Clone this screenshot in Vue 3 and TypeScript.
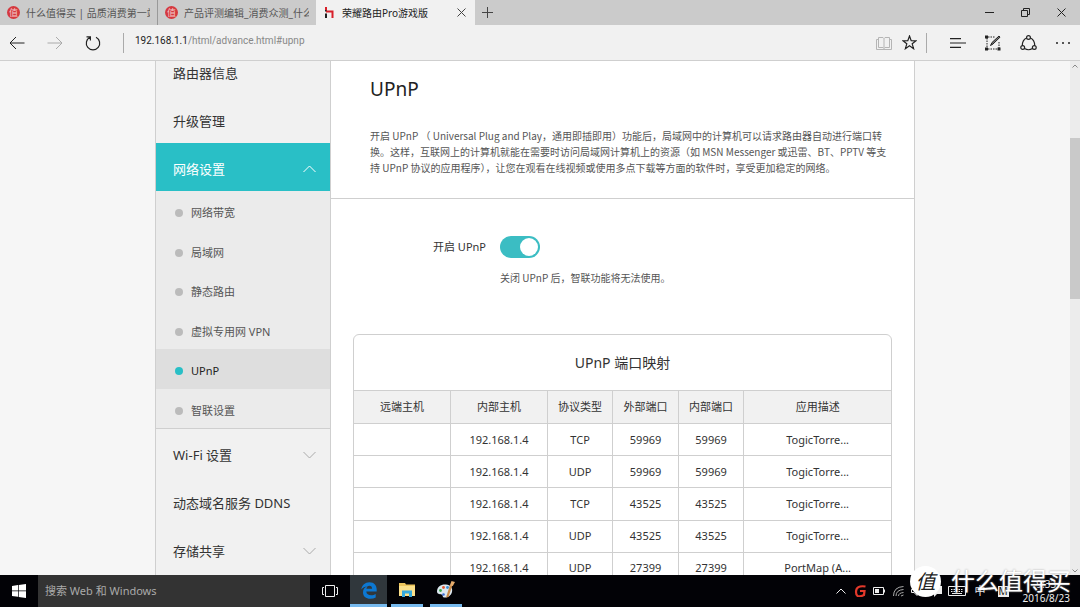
<script setup lang="ts">
import { ref } from 'vue'

interface MenuItem {
  label: string
  arrow?: 'up' | 'down'
  children?: string[]
}

interface Mapping {
  remote: string
  host: string
  protocol: string
  external: string
  internal: string
  description: string
}

const menu: MenuItem[] = [
  { label: '路由器信息' },
  { label: '升级管理' },
  {
    label: '网络设置',
    arrow: 'up',
    children: ['网络带宽', '局域网', '静态路由', '虚拟专用网 VPN', 'UPnP', '智联设置'],
  },
  { label: 'Wi-Fi 设置', arrow: 'down' },
  { label: '动态域名服务 DDNS' },
  { label: '存储共享', arrow: 'down' },
]

const intro: string[] = [
  '开启 UPnP （ Universal Plug and Play，通用即插即用）功能后，局域网中的计算机可以请求路由器自动进行端口转',
  '换。这样，互联网上的计算机就能在需要时访问局域网计算机上的资源（如 MSN Messenger 或迅雷、BT、PPTV 等支',
  '持 UPnP 协议的应用程序），让您在观看在线视频或使用多点下载等方面的软件时，享受更加稳定的网络。',
]

const headers: string[] = ['远端主机', '内部主机', '协议类型', '外部端口', '内部端口', '应用描述']

const mappings: Mapping[] = [
  { remote: '', host: '192.168.1.4', protocol: 'TCP', external: '59969', internal: '59969', description: 'TogicTorre...' },
  { remote: '', host: '192.168.1.4', protocol: 'UDP', external: '59969', internal: '59969', description: 'TogicTorre...' },
  { remote: '', host: '192.168.1.4', protocol: 'TCP', external: '43525', internal: '43525', description: 'TogicTorre...' },
  { remote: '', host: '192.168.1.4', protocol: 'UDP', external: '43525', internal: '43525', description: 'TogicTorre...' },
  { remote: '', host: '192.168.1.4', protocol: 'UDP', external: '27399', internal: '27399', description: 'PortMap (A...' },
]

const activePage = ref('UPnP')
const enabled = ref(true)
const query = ref('')
</script>

<template>
  <div class="desktop">
    <header class="tabs">
      <button class="tab first" type="button">
        <span class="favicon">值</span>
        <span class="tab-title">什么值得买 | 品质消费第一站</span>
      </button>
      <button class="tab second" type="button">
        <span class="favicon">值</span>
        <span class="tab-title">产品评测编辑_消费众测_什么值</span>
      </button>
      <div class="tab current">
        <svg class="honor" viewBox="0 0 9 11">
          <path d="M1 0v4.500" stroke="#222" stroke-width="2" />
          <path d="M1 6.500V11" stroke="#222" stroke-width="2" />
          <path d="M1 0v3M1 4.500h6.500V11" fill="none" stroke="#d8202a" stroke-width="2" />
        </svg>
        <span class="tab-title">荣耀路由Pro游戏版</span>
        <button class="icon-button" type="button" aria-label="关闭标签页">
          <svg width="9" height="9" viewBox="0 0 9 9"><path d="M.5.5l8 8m0-8l-8 8" stroke="#444" /></svg>
        </button>
      </div>
      <button class="icon-button new-tab" type="button" aria-label="新建标签页">
        <svg width="11" height="11" viewBox="0 0 11 11"><path d="M5.500 0v11M0 5.500h11" stroke="#444" /></svg>
      </button>
      <div class="window-controls">
        <button class="icon-button" type="button" aria-label="最小化">
          <svg width="9" height="9" viewBox="0 0 9 9"><path d="M0 4.500h9" stroke="#222" /></svg>
        </button>
        <button class="icon-button" type="button" aria-label="还原">
          <svg width="9" height="9" viewBox="0 0 9 9" fill="none" stroke="#222"><path d="M.5 2.500h6v6h-6zM2.500 2V.5h6v6H7" /></svg>
        </button>
        <button class="icon-button" type="button" aria-label="关闭">
          <svg width="9" height="9" viewBox="0 0 9 9"><path d="M.5.5l8 8m0-8l-8 8" stroke="#222" /></svg>
        </button>
      </div>
    </header>

    <nav class="toolbar">
      <button class="icon-button" type="button" aria-label="后退">
        <svg width="16" height="14" viewBox="0 0 16 14" fill="none" stroke="#222"><path d="M7 1L1 7l6 6M1 7h14.500" /></svg>
      </button>
      <button class="icon-button" type="button" aria-label="前进">
        <svg width="16" height="14" viewBox="0 0 16 14" fill="none" stroke="#aaa"><path d="M9 1l6 6-6 6M15 7H.5" /></svg>
      </button>
      <button class="icon-button" type="button" aria-label="刷新">
        <svg width="16" height="16" viewBox="0 0 16 16" fill="none" stroke="#222" stroke-width="1.200"><path d="M5 2.200A6.700 6.700 0 1 0 11 2.200M1.500 1.800H5.400V5.600" /></svg>
      </button>
      <span class="divider"></span>
      <p class="address"><span class="host">192.168.1.1</span>/html/advance.html#upnp</p>
      <div class="tools">
        <button class="icon-button" type="button" aria-label="阅读视图">
          <svg width="16" height="14" viewBox="0 0 16 14" fill="none" stroke="#b5b5b5"><path d="M2.500 1.500h4.500l1 1 1-1h4.500v10H9l-1 1-1-1H2.500zM8 2.500v10M2 3.500H.5v10h15v-10H14" /></svg>
        </button>
        <button class="icon-button star" type="button" aria-label="收藏">
          <svg width="15" height="15" viewBox="0 0 15 15" fill="none" stroke="#222" stroke-width="1.200"><path d="M7.500 1l1.700 4.700 4.900.1-3.900 3 1.400 4.900-4.100-2.900-4.100 2.900 1.400-4.900-3.900-3 4.900-.1z" /></svg>
        </button>
        <span class="divider"></span>
        <button class="icon-button hub" type="button" aria-label="中心">
          <svg width="16" height="10" viewBox="0 0 16 10" stroke="#222" stroke-width="1.200"><path d="M0 .6h11M0 5h16M0 9.400h11" /></svg>
        </button>
        <button class="icon-button" type="button" aria-label="做 Web 笔记">
          <svg width="16" height="16" viewBox="0 0 16 16" fill="none" stroke="#222">
            <path d="M2 3v10M14 7v6M3 2h7M3 14h10" stroke-dasharray="1.500 1" />
            <path d="M0 .5h3v3H0zM0 12.500h3v3H0zM12.500 12.500h3v3h-3z" fill="#222" stroke="none" />
            <path d="M5.500 10.500L7 7.500l7-6.500 1 1.200-7 6.800z" fill="#777" />
          </svg>
        </button>
        <button class="icon-button" type="button" aria-label="共享">
          <svg width="17" height="16" viewBox="0 0 17 16" fill="none" stroke="#222" stroke-width="1.200">
            <circle cx="8.500" cy="2.500" r="1.900" /><circle cx="2.700" cy="12.500" r="1.900" /><circle cx="14.300" cy="12.500" r="1.900" />
            <path d="M6.600 3Q2.300 5 2.300 10.500M10.400 3Q14.700 5 14.700 10.500M4.500 13.500Q8.500 16 12.500 13.500" />
          </svg>
        </button>
        <button class="icon-button" type="button" aria-label="更多">
          <svg width="16" height="4" viewBox="0 0 16 4" fill="#222"><circle cx="2" cy="2" r="1" /><circle cx="8" cy="2" r="1" /><circle cx="14" cy="2" r="1" /></svg>
        </button>
      </div>
    </nav>

    <div class="viewport">
      <div class="page-area">
        <div class="page">
          <aside class="sidebar">
            <template v-for="item in menu" :key="item.label">
              <a class="menu-item" :class="{ open: item.children }" href="#">
                {{ item.label }}
                <svg v-if="item.arrow" width="13" height="8" viewBox="0 0 13 8" fill="none" stroke="currentColor">
                  <path :d="item.arrow === 'up' ? 'M.5 7l6-6 6 6' : 'M.5 1l6 6 6-6'" />
                </svg>
              </a>
              <div v-if="item.children" class="submenu">
                <a
                  v-for="child in item.children"
                  :key="child"
                  class="submenu-item"
                  :class="{ active: child === activePage }"
                  href="#"
                  @click.prevent="activePage = child"
                >{{ child }}</a>
              </div>
            </template>
          </aside>

          <main class="content">
            <section class="intro">
              <h1>UPnP</h1>
              <p><span v-for="line in intro" :key="line">{{ line }}</span></p>
            </section>
            <section class="setting">
              <label for="upnp-switch">开启 UPnP</label>
              <input id="upnp-switch" v-model="enabled" class="switch" type="checkbox" />
              <p>关闭 UPnP 后，智联功能将无法使用。</p>
            </section>
            <section class="mapping">
              <h2>UPnP 端口映射</h2>
              <table>
                <colgroup>
                  <col class="wide" /><col class="wide" /><col class="slim" /><col class="slim" /><col class="slim" /><col class="rest" />
                </colgroup>
                <thead>
                  <tr><th v-for="head in headers" :key="head" scope="col">{{ head }}</th></tr>
                </thead>
                <tbody>
                  <tr v-for="(row, i) in mappings" :key="i">
                    <td>{{ row.remote }}</td>
                    <td>{{ row.host }}</td>
                    <td>{{ row.protocol }}</td>
                    <td>{{ row.external }}</td>
                    <td>{{ row.internal }}</td>
                    <td>{{ row.description }}</td>
                  </tr>
                </tbody>
              </table>
            </section>
          </main>
        </div>
      </div>
      <div class="scrollbar">
        <svg width="6" height="4" viewBox="0 0 6 4" fill="none" stroke="#888"><path d="M.5 3.500L3 1l2.500 2.500" /></svg>
        <span class="thumb"></span>
        <svg width="6" height="4" viewBox="0 0 6 4" fill="none" stroke="#888"><path d="M.5.5L3 3 5.500.5" /></svg>
      </div>
    </div>

    <footer class="taskbar">
      <button class="start" type="button" aria-label="开始">
        <svg width="14" height="14" viewBox="0 0 14 14" fill="#fff"><path d="M0 2l6-.9v5.400H0zM6.700 1L14 0v6.500H6.700zM0 7.300h6v5.400l-6-.8zM6.700 7.300H14V14l-7.300-1z" /></svg>
      </button>
      <input v-model="query" class="search" type="text" aria-label="搜索" placeholder="搜索 Web 和 Windows" />
      <button class="app task-view" type="button" aria-label="任务视图">
        <svg width="16" height="12" viewBox="0 0 16 12" fill="none" stroke="#eee"><path d="M3.500.5h9v11h-9zM2 2.500H.5v7H2M14 2.500h1.500v7H14" /></svg>
      </button>
      <button class="app running edge" type="button" aria-label="Edge">
        <svg width="16" height="17" viewBox="0 0 16 17">
          <path d="M.3 7.600C.9 3 4.100.2 8.400.2c4.900 0 7.300 3.500 7.300 7.300v2H5.300c.1 2.500 2.200 3.800 4.800 3.800 1.800 0 3.300-.5 4.600-1.300v3.500c-1.500.8-3.300 1.200-5.300 1.200-4.500 0-7.400-2.500-7.400-6.300 0-2.900 1.600-5.100 4.300-6.100C3.900 4.700 1.700 5.600.3 7.600zM5.400 6.700h5.700c0-1.900-.9-3-2.700-3-1.700 0-2.700 1.200-3 3z" fill="#0d78d2" />
        </svg>
      </button>
      <button class="app running" type="button" aria-label="文件资源管理器">
        <svg width="18" height="16" viewBox="0 0 18 16">
          <path d="M1 1h6l1 1.500h9V14H1z" fill="#edc55c" /><path d="M1 4h16v10H1z" fill="#fbe08a" />
          <path d="M4 15V8.500h10V15h-3v-3.500H7V15z" fill="#35a9dc" />
        </svg>
      </button>
      <button class="app running" type="button" aria-label="画图">
        <svg width="20" height="18" viewBox="0 0 20 18">
          <path d="M1 10.500C1 5.500 5.500 3 10 3.500s7 3.500 6 7.500-5 6-8 5.500c-2-.4-.5-2.600-2.500-3S1 13 1 10.500z" fill="#dce8f0" />
          <circle cx="4.500" cy="9.500" r="1.400" fill="#3ca84b" /><circle cx="7.500" cy="6.500" r="1.400" fill="#e4572e" /><circle cx="11.500" cy="6.500" r="1.400" fill="#3c8fd4" /><circle cx="7.500" cy="13.500" r="1.300" fill="#3c6fd4" />
          <path d="M10 16.500L14 4h2.500L12.500 16z" fill="#c88a48" /><path d="M13.800 4.500L15.500 0l3.500 1-2.200 4z" fill="#e5ac6c" />
        </svg>
      </button>

      <div class="tray">
        <svg viewBox="0 0 14 12" fill="none" stroke="#eee"><path d="M2.500 8.500L7 4l4.500 4.500" /></svg>
        <svg viewBox="0 0 14 12" fill="none" stroke="#e3392b" stroke-width="2.200"><path d="M12.500 1.500Q3 0 3 7t8 3l.5-4H7" /></svg>
        <svg viewBox="0 0 14 12" fill="none" stroke="#eee"><path d="M1.500 2.500h10v7h-10zM12.500 4.500v3" /><path d="M3 4h4v4H3z" fill="#eee" stroke="none" /></svg>
        <svg viewBox="0 0 14 12" fill="none" stroke="#aaa"><path d="M2.500 11Q2.500 2 12.500 1.500M5 11q0-6 7.500-6.500M7.500 11q0-3 5-3.500M10 11l2.500-1" /></svg>
        <svg viewBox="0 0 14 12" fill="none" stroke="#eee"><path d="M1.500 4.500H4l3-3v9l-3-3H1.500zM9 4q2 2 0 4M11 2q3 4 0 8" /></svg>
        <svg viewBox="0 0 14 12" fill="#eee"><path d="M1 1h12v8H8l-3 3V9H1z" /></svg>
        <svg class="keyboard" viewBox="0 0 18 12" fill="none" stroke="#eee"><path d="M.5 1.500h17v9H.5z" /><path d="M3 4.500h12M3 6.500h12" stroke-dasharray="1.500 1" /><path d="M4 8.500h10" /></svg>
        <span class="ime">中</span>
        <span class="ime-mode">M</span>
        <p class="clock"><span>9:33</span><span>2016/8/23</span></p>
      </div>
    </footer>

    <div class="watermark"><span class="badge">值</span><span>什么值得买</span></div>
  </div>
</template>

<style>
html,
body {
  margin: 0;
}
</style>

<style scoped>
.desktop {
  --line: #cfcfcf;
  --accent: #29bfc6;
  position: relative;
  display: flex;
  flex-direction: column;
  height: 100vh;
  overflow: hidden;
  color: #333;
  background: #f6f6f6;
  font: 11px/16px "Noto Sans", "Noto Sans CJK SC", sans-serif;
}

.desktop * {
  box-sizing: border-box;
}

h1,
h2,
p {
  margin: 0;
  font-weight: 400;
}

button,
input {
  margin: 0;
  padding: 0;
  border: 0;
  border-radius: 0;
  color: inherit;
  background: none;
  font: inherit;
}

a {
  color: inherit;
  text-decoration: none;
}

svg {
  display: block;
  flex: none;
}

.icon-button {
  display: grid;
  place-items: center;
  width: 16px;
  height: 16px;
  flex: none;
}

/* Browser tabs */
.tabs {
  display: flex;
  flex: none;
  height: 25px;
  background: #cbcbcb;
  font-size: 10px;
}

.tab {
  display: flex;
  align-items: center;
  gap: 6px;
  flex: none;
  width: 158px;
  padding: 0 7px;
  color: #555;
  text-align: left;
}

.tab.first {
  border-right: 1px solid #999;
}

.tab-title {
  flex: 1;
  overflow: hidden;
  white-space: nowrap;
}

.tab.current {
  gap: 8px;
  width: 159px;
  padding: 0 6px 0 9px;
  color: #222;
  background: #f1f1f1;
}

.favicon {
  display: grid;
  place-items: center;
  flex: none;
  width: 13px;
  height: 13px;
  border-radius: 50%;
  color: #f3c9c9;
  background: #d5393f;
  font-size: 9px;
  line-height: 12px;
}

.honor {
  width: 9px;
  height: 11px;
}

.new-tab {
  align-self: center;
  margin-left: 4px;
}

.window-controls {
  display: flex;
  align-items: center;
  gap: 20px;
  margin-left: auto;
  padding-right: 11px;
}

/* Address bar */
.toolbar {
  display: flex;
  align-items: center;
  flex: none;
  gap: 22px;
  height: 36px;
  padding: 0 9px;
  border-bottom: 1px solid var(--line);
  background: #f1f1f1;
}

.divider {
  width: 1px;
  height: 20px;
  background: #aaa;
}

.address {
  margin-left: -11px;
  padding-bottom: 4px;
  color: #888;
  font-family: Roboto, sans-serif;
  font-size: 10px;
}

.host {
  color: #222;
}

.tools {
  display: flex;
  align-items: center;
  gap: 19px;
  margin-left: auto;
}

.star {
  margin: 0 -10px;
}

.hub {
  margin-left: 4px;
}

/* Web page */
.viewport {
  display: flex;
  flex: 1;
  min-height: 0;
}

.page-area {
  flex: 1;
  overflow: hidden;
}

.page {
  display: grid;
  grid-template-columns: 176px minmax(0, 1fr);
  max-width: 760px;
  min-height: 100%;
  margin: 0 auto;
  border-right: 1px solid var(--line);
  background: #fff;
}

.sidebar {
  margin-top: -14px;
  border: solid var(--line);
  border-width: 0 1px;
  background: #f1f1f1;
  font-size: 13px;
}

.menu-item {
  display: flex;
  align-items: center;
  justify-content: space-between;
  height: 48px;
  padding: 4px 14px 0 17px;
}

.menu-item svg {
  color: #aaa;
}

.menu-item.open,
.menu-item.open svg {
  color: #fff;
}

.menu-item.open {
  background: var(--accent);
}

.submenu {
  display: grid;
  grid-auto-rows: 1fr;
  height: 238px;
  border-bottom: 1px solid var(--line);
  color: #555;
  background: #ebebeb;
  font-size: 11px;
}

.submenu-item {
  display: flex;
  align-items: center;
  gap: 8px;
  padding: 5px 0 0 19px;
}

.submenu-item::before {
  width: 8px;
  height: 8px;
  border-radius: 50%;
  background: #bbb;
  content: "";
}

.submenu-item.active {
  color: #222;
  background: #dedede;
}

.submenu-item.active::before {
  background: var(--accent);
}

.intro {
  padding: 14px 26px 22px 39px;
  border-bottom: 1px solid var(--line);
}

.intro h1 {
  margin-bottom: 25px;
  color: #222;
  font-size: 19px;
  line-height: 28px;
}

.intro p {
  color: #555;
  font-family: "Noto Sans CJK SC", sans-serif;
  font-size: 10px;
}

.intro p span {
  display: block;
  white-space: nowrap;
}

.setting {
  display: grid;
  grid-template-columns: 155px 1fr;
  align-items: center;
  gap: 12px 14px;
  padding: 37px 0 48px;
}

.setting label {
  text-align: right;
}

.setting p {
  grid-column: 2;
  color: #555;
  font-family: "Noto Sans CJK SC", sans-serif;
  font-size: 10px;
}

.switch {
  width: 40px;
  height: 22px;
  padding: 2px;
  border-radius: 11px;
  background: #bbb;
  appearance: none;
}

.switch::before {
  display: block;
  width: 18px;
  height: 18px;
  border-radius: 50%;
  background: #fff;
  content: "";
}

.switch:checked {
  background: #3bbdc3;
}

.switch:checked::before {
  margin-left: auto;
}

.mapping {
  margin: 0 22px;
  overflow: hidden;
  border: 1px solid var(--line);
  border-radius: 6px 6px 0 0;
}

.mapping h2 {
  font-size: 14px;
  line-height: 55px;
  text-align: center;
}

table {
  width: 100%;
  height: 195px;
  border-collapse: collapse;
  table-layout: fixed;
}

.wide {
  width: 18%;
}

.slim {
  width: 12.2%;
}

.rest {
  width: 27.4%;
}

th,
td {
  padding: 0;
  border: 1px solid var(--line);
  font-weight: 400;
  text-align: center;
}

th {
  height: 33px;
  background: #f1f1f1;
}

th:first-child,
td:first-child {
  border-left: 0;
}

th:last-child,
td:last-child {
  border-right: 0;
}

.scrollbar {
  display: flex;
  flex-direction: column;
  align-items: center;
  flex: none;
  width: 10px;
  padding: 3px 0 2px;
  background: #ececec;
}

.thumb {
  width: 100%;
  height: 161px;
  margin: 70px 0 auto;
  background: #c9c9c9;
}

/* Windows taskbar */
.taskbar {
  display: flex;
  flex: none;
  height: 32px;
  color: #eee;
  background: #020206;
}

.start {
  display: grid;
  place-items: center;
  width: 38px;
}

.search {
  width: 272px;
  padding: 0 7px;
  background: #333;
}

.search::placeholder {
  color: #aaa;
  opacity: 1;
}

.app {
  display: grid;
  place-items: center;
  width: 32px;
  margin-left: 4px;
  border-bottom: 3px solid transparent;
}

.app + .app {
  margin-left: 7px;
}

.app.running {
  border-bottom-color: #76b9ed;
}

.app.task-view {
  width: 31px;
  border-bottom: 0;
}

.app.edge {
  width: 37px;
  margin-left: 5px;
  padding-top: 2px;
  background: #30373c;
}

.app.edge + .app {
  margin-left: 4px;
}

.tray {
  display: flex;
  align-items: center;
  gap: 5px;
  margin-left: auto;
  padding-right: 10px;
}

.tray svg {
  width: 14px;
  height: 12px;
}

.tray .keyboard {
  width: 18px;
}

.ime {
  width: 14px;
  margin-left: 4px;
}

.ime-mode {
  width: 11px;
  margin: 0 9px 0 4px;
  color: #111;
  background: #eee;
  font-size: 10px;
  line-height: 11px;
  text-align: center;
}

.clock {
  display: grid;
  font-size: 10px;
  line-height: 14px;
  text-align: center;
}

/* Site mark laid over the corner of the screen */
.watermark {
  position: absolute;
  right: 9px;
  bottom: 10px;
  display: flex;
  align-items: center;
  gap: 10px;
  color: #fff;
  font-size: 24px;
  line-height: 32px;
  text-shadow: 0 0 2px #999;
}

.badge {
  display: grid;
  place-items: center;
  width: 31px;
  height: 31px;
  border-radius: 50%;
  color: #222;
  background: #fff;
  font-size: 20px;
  font-style: italic;
  text-shadow: none;
}
</style>
